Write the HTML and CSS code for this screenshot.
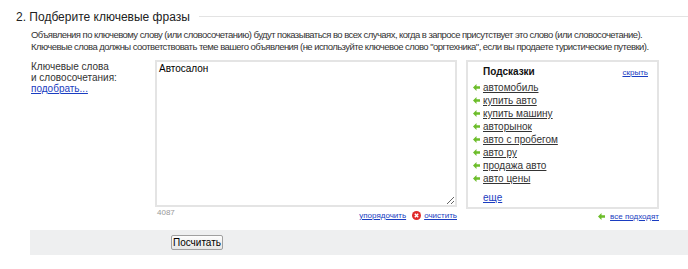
FILE: index.html
```html
<!DOCTYPE html>
<html lang="ru">
<head>
    <meta charset="UTF-8">
    <title>Подберите ключевые фразы</title>
    <link rel="stylesheet" href="styles.css">
</head>
<body>
    <div class="step">
        <div class="step-head">
            <h2>2. Подберите ключевые фразы</h2>
            <div class="rule"></div>
        </div>
        <p class="intro">
            Объявления по ключевому слову (или словосочетанию) будут показываться во всех случаях, когда в запросе присутствует это слово (или словосочетание).<br>
            Ключевые слова должны соответствовать теме вашего объявления (не используйте ключевое слово "оргтехника", если вы продаете туристические путевки).
        </p>
        <div class="phrases">
            <div class="label">
                Ключевые слова<br>
                и словосочетания:<br>
                <a href="#" class="pick">подобрать...</a>
            </div>
            <div class="editor">
                <textarea class="words">Автосалон</textarea>
                <div class="editor-foot">
                    <span class="count">4087</span>
                    <span class="tools">
                        <a href="#" class="small-link">упорядочить</a>
                        <span class="clear-icon">
                            <svg width="9" height="9" viewBox="0 0 10 10">
                                <circle cx="5" cy="5" r="5" fill="#e02a2a"/>
                                <path d="M3.1 3.1 L6.9 6.9 M6.9 3.1 L3.1 6.9" stroke="#fff" stroke-width="1.6"/>
                            </svg>
                        </span>
                        <a href="#" class="small-link">очистить</a>
                    </span>
                </div>
            </div>
            <div class="hints-col">
                <div class="hints">
                    <div class="hints-head">
                        <b>Подсказки</b>
                        <a href="#" class="small-link">скрыть</a>
                    </div>
                    <ul class="hint-list">
                        <li><svg class="arrow" width="7" height="7" viewBox="0 0 8 8"><path d="M0 4 L4 0 L4 2.7 L8 2.7 L8 5.3 L4 5.3 L4 8 Z"/></svg><a href="#">автомобиль</a></li>
                        <li><svg class="arrow" width="7" height="7" viewBox="0 0 8 8"><path d="M0 4 L4 0 L4 2.7 L8 2.7 L8 5.3 L4 5.3 L4 8 Z"/></svg><a href="#">купить авто</a></li>
                        <li><svg class="arrow" width="7" height="7" viewBox="0 0 8 8"><path d="M0 4 L4 0 L4 2.7 L8 2.7 L8 5.3 L4 5.3 L4 8 Z"/></svg><a href="#">купить машину</a></li>
                        <li><svg class="arrow" width="7" height="7" viewBox="0 0 8 8"><path d="M0 4 L4 0 L4 2.7 L8 2.7 L8 5.3 L4 5.3 L4 8 Z"/></svg><a href="#">авторынок</a></li>
                        <li><svg class="arrow" width="7" height="7" viewBox="0 0 8 8"><path d="M0 4 L4 0 L4 2.7 L8 2.7 L8 5.3 L4 5.3 L4 8 Z"/></svg><a href="#">авто с пробегом</a></li>
                        <li><svg class="arrow" width="7" height="7" viewBox="0 0 8 8"><path d="M0 4 L4 0 L4 2.7 L8 2.7 L8 5.3 L4 5.3 L4 8 Z"/></svg><a href="#">авто ру</a></li>
                        <li><svg class="arrow" width="7" height="7" viewBox="0 0 8 8"><path d="M0 4 L4 0 L4 2.7 L8 2.7 L8 5.3 L4 5.3 L4 8 Z"/></svg><a href="#">продажа авто</a></li>
                        <li><svg class="arrow" width="7" height="7" viewBox="0 0 8 8"><path d="M0 4 L4 0 L4 2.7 L8 2.7 L8 5.3 L4 5.3 L4 8 Z"/></svg><a href="#">авто цены</a></li>
                    </ul>
                    <a href="#" class="more">еще</a>
                </div>
                <div class="all-fit">
                    <svg class="arrow" width="7" height="7" viewBox="0 0 8 8"><path d="M0 4 L4 0 L4 2.7 L8 2.7 L8 5.3 L4 5.3 L4 8 Z"/></svg><a href="#" class="small-link">все подходят</a>
                </div>
            </div>
        </div>
        <div class="actions">
            <button type="button" class="count-btn">Посчитать</button>
        </div>
    </div>
</body>
</html>
```

FILE: styles.css
```css
body {
    margin: 0;
    font-family: "Liberation Sans", Arial, sans-serif;
    color: #333;
    background: #fff;
}
a {
    color: #1a3dc1;
}
.step-head {
    display: flex;
    align-items: center;
    padding: 9px 0 0 16px;
    height: 15px;
}
.step-head h2 {
    margin: 0;
    font-size: 12px;
    font-weight: normal;
    color: #222;
    white-space: nowrap;
}
.rule {
    flex: 1;
    margin-left: 9px;
    border-top: 1px solid #e3e3e3;
}
.intro {
    margin: 5px 0 0 31px;
    font-size: 9.5px;
    line-height: 12px;
    letter-spacing: -0.55px;
    white-space: nowrap;
    color: #333;
}
.phrases {
    display: flex;
    margin: 7px 0 0 31px;
}
.label {
    width: 124px;
    font-size: 10px;
    line-height: 11px;
    padding-top: 1px;
}
.pick {
    color: #1a3dc1;
}
.editor {
    width: 302px;
}
.words {
    display: block;
    box-sizing: border-box;
    width: 302px;
    height: 147px;
    margin: 0;
    padding: 1px 2px;
    border: 2px solid #e4e4e4;
    font-family: "Liberation Sans", Arial, sans-serif;
    font-size: 10px;
    color: #000;
    resize: vertical;
}
.editor-foot {
    display: flex;
    justify-content: space-between;
    padding: 1px 0 0 2px;
    font-size: 8px;
}
.count {
    color: #999;
}
.tools {
    display: flex;
    align-items: center;
    padding-top: 3px;
}
.small-link {
    font-size: 8px;
    color: #1a3dc1;
}
.clear-icon {
    display: inline-flex;
    margin: 0 3px 0 6px;
}
.hints-col {
    margin-left: 9px;
    width: 193px;
}
.hints {
    box-sizing: border-box;
    height: 149px;
    border: 2px solid #e4e4e4;
    padding: 4px 9px 0 15px;
    font-size: 10px;
}
.hints-head {
    display: flex;
    justify-content: space-between;
    align-items: baseline;
}
.hints-head b {
    color: #111;
    font-size: 10px;
}
.hint-list {
    list-style: none;
    margin: 4px 0 0 -10px;
    padding: 0;
}
.hint-list li {
    display: flex;
    align-items: center;
    height: 13px;
}
.hint-list a {
    color: #333;
}
.arrow {
    fill: #6cbd2a;
    margin-right: 3px;
    flex: none;
}
.more {
    display: inline-block;
    margin-top: 7px;
    color: #1a3dc1;
}
.all-fit {
    display: flex;
    justify-content: flex-end;
    align-items: center;
    padding: 3px 0 0 0;
}
.all-fit .arrow {
    margin-right: 5px;
}
.actions {
    margin: 9px 0 0 30px;
    height: 25px;
    background: #eeeff0;
    padding-left: 141px;
    display: flex;
    align-items: center;
}
.count-btn {
    height: 15px;
    width: 52px;
    padding: 0;
    font-family: "Liberation Sans", Arial, sans-serif;
    font-size: 10px;
    color: #000;
    background: linear-gradient(#fdfdfd, #e6e6e6);
    border: 1px solid #a0a0a0;
    border-radius: 2px;
}
```
